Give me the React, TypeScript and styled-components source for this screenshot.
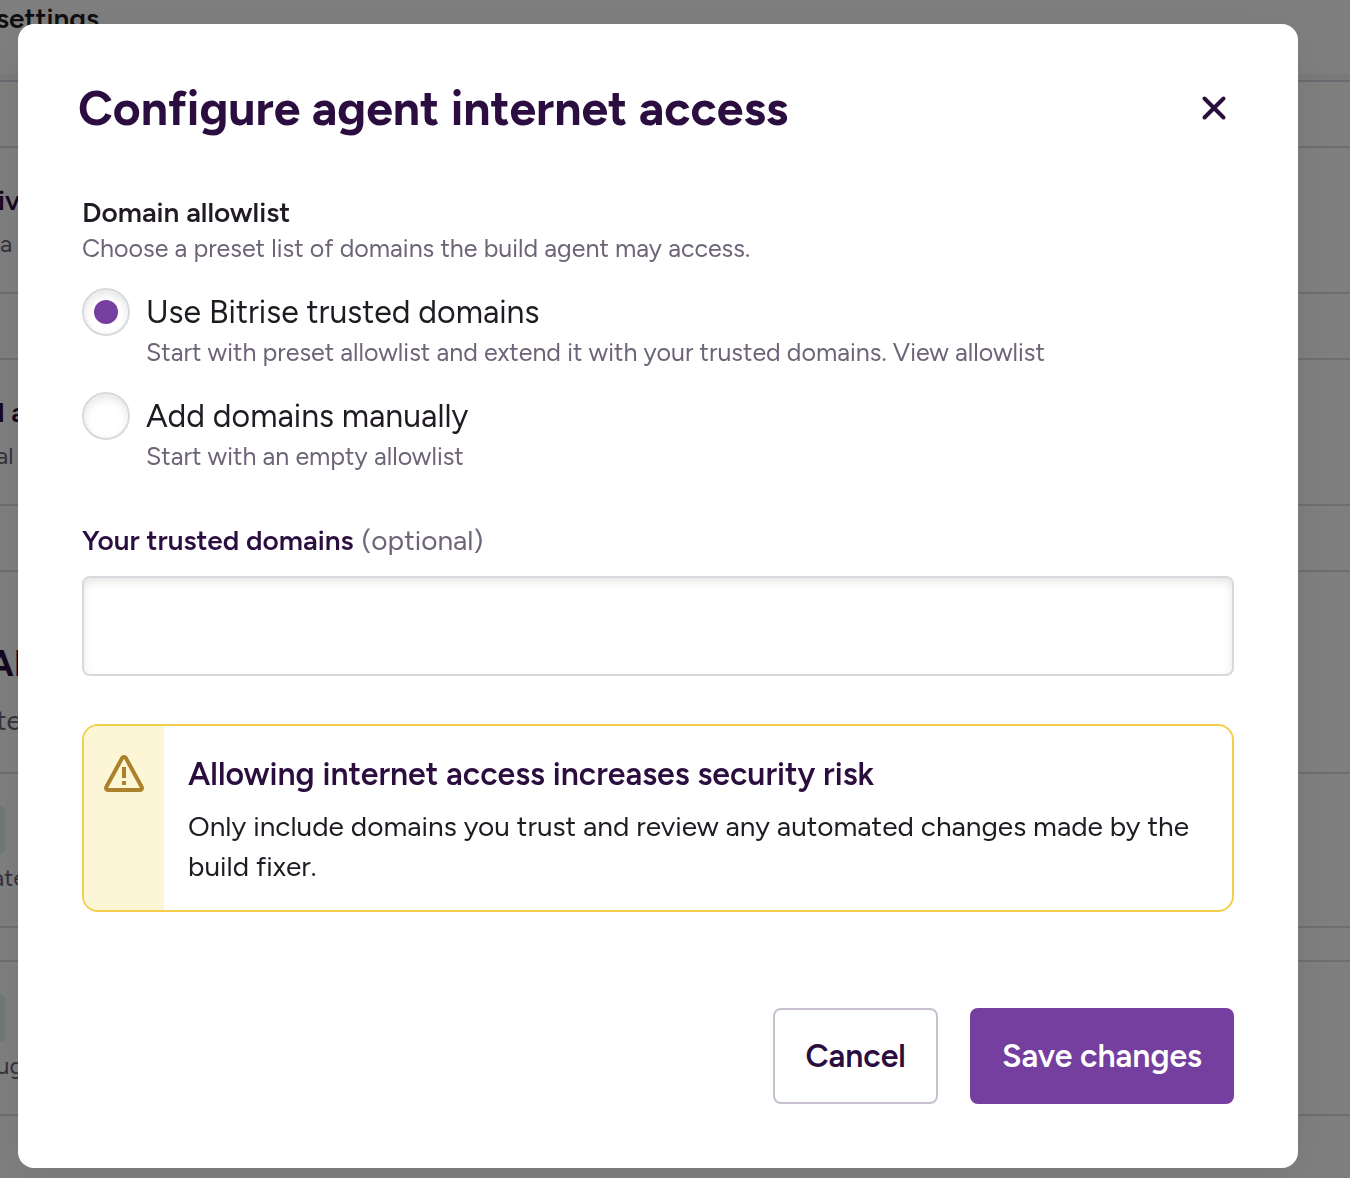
import React, { useState } from 'react';
import styled, { createGlobalStyle } from 'styled-components';

const color = {
  ink: '#201b22',
  heading: '#2b0e3f',
  muted: '#6e6478',
  purple: '#743f9f',
  border: '#dad8df',
  buttonBorder: '#c9c1cf',
  warningBorder: '#f3ce4b',
  warningTint: '#fdf6d6',
  warningIcon: '#ac812b',
};

const GlobalStyle = createGlobalStyle`
  *, *::before, *::after { box-sizing: border-box; }
  body {
    margin: 0;
    background: #fff;
    color: ${color.ink};
    font-family: Figtree, Roboto, "Liberation Sans", sans-serif;
    overflow: hidden;
  }
  h1, h2, h3, p { margin: 0; }
`;

/* Settings page behind the dialog */

const Page = styled.div`
  min-height: 100vh;
  overflow: hidden;
`;

const PageHeader = styled.header`
  height: 82px;
  border-bottom: 2px solid #d5d2e0;
  box-shadow: inset 0 -6px 0 #f4f4f4;
`;

const PageTitle = styled.h2`
  margin-left: -4px;
  font-size: 28px;
  line-height: 36px;
  font-weight: 600;
`;

const Section = styled.section<{ $height: number; $intro?: boolean }>`
  display: flex;
  flex-direction: column;
  justify-content: center;
  align-items: flex-start;
  gap: ${(p) => (p.$intro ? 16 : 8)}px;
  height: ${(p) => p.$height}px;
  padding-top: ${(p) => (p.$intro ? 32 : 0)}px;
  border-bottom: 2px solid #dcdcdc;
  white-space: nowrap;
`;

const SectionTitle = styled.h3<{ $large?: boolean }>`
  margin-left: ${(p) => (p.$large ? -12 : -2)}px;
  color: ${color.heading};
  font-size: ${(p) => (p.$large ? 36 : 28)}px;
  line-height: ${(p) => (p.$large ? 48 : 40)}px;
  font-weight: ${(p) => (p.$large ? 700 : 600)};
`;

const SectionText = styled.p<{ $large?: boolean; $bleed?: number }>`
  margin-left: -${(p) => p.$bleed ?? 0}px;
  color: ${color.muted};
  font-size: ${(p) => (p.$large ? 28 : 24)}px;
  line-height: 32px;
`;

const Badge = styled.span`
  width: 5px;
  height: 48px;
  border-radius: 0 8px 8px 0;
  background: #d9f3f1;
`;

/* Dialog */

const Overlay = styled.div`
  position: fixed;
  inset: 0;
  display: flex;
  justify-content: center;
  align-items: flex-start;
  padding: 24px 52px 10px 18px;
  background: rgba(0, 0, 0, 0.5);
  overflow: auto;
`;

const Dialog = styled.div`
  width: 100%;
  max-width: 1280px;
  padding: 56px 64px 64px;
  border-radius: 16px;
  background: #fff;
  box-shadow: 0 8px 48px rgba(0, 0, 0, 0.08);
`;

const DialogHeader = styled.header`
  display: flex;
  justify-content: space-between;
  align-items: center;
  margin: 0 -8px 56px -4px;
`;

const DialogTitle = styled.h1`
  color: ${color.heading};
  font-size: 48px;
  line-height: 56px;
  font-weight: 700;
`;

const CloseButton = styled.button`
  display: flex;
  padding: 8px;
  border: 0;
  background: none;
  color: ${color.heading};
  cursor: pointer;
`;

const Fieldset = styled.fieldset`
  display: flex;
  flex-direction: column;
  margin: 0 0 48px;
  padding: 0;
  border: 0;
`;

const Legend = styled.legend`
  padding: 0;
  font-size: 28px;
  line-height: 40px;
  font-weight: 600;
`;

const HelpText = styled.p`
  color: ${color.muted};
  font-size: 25px;
  line-height: 32px;
`;

const Options = styled.div`
  display: flex;
  flex-direction: column;
  gap: 24px;
  margin-top: 24px;
`;

const Option = styled.div`
  display: grid;
  grid-template-columns: 48px 1fr;
  column-gap: 16px;
`;

const Radio = styled.input`
  appearance: none;
  display: grid;
  place-items: center;
  width: 48px;
  height: 48px;
  margin: 0;
  border: 2px solid ${color.border};
  border-radius: 50%;
  background: #fff;
  box-shadow: inset 0 4px 8px rgba(0, 0, 0, 0.1);

  &:checked::before {
    content: '';
    width: 24px;
    height: 24px;
    border-radius: 50%;
    background: ${color.purple};
  }
`;

const OptionLabel = styled.label`
  font-size: 32px;
  line-height: 48px;
`;

const OptionHelp = styled(HelpText)`
  grid-column: 2;
`;

const Link = styled.a`
  color: inherit;
  text-decoration: none;
`;

const Field = styled.div`
  display: flex;
  flex-direction: column;
  gap: 16px;
  margin-bottom: 48px;
`;

const FieldLabel = styled.label`
  display: flex;
  gap: 8px;
  color: ${color.heading};
  font-size: 28px;
  line-height: 40px;
  font-weight: 600;
`;

const Optional = styled.span`
  color: ${color.muted};
  font-weight: 400;
`;

const TextInput = styled.input`
  width: 100%;
  height: 100px;
  padding: 0 24px;
  border: 2px solid ${color.border};
  border-radius: 8px;
  background: #fff;
  box-shadow: inset 0 4px 8px rgba(0, 0, 0, 0.1);
  color: ${color.ink};
  font: inherit;
  font-size: 32px;
  outline: none;
`;

const Alert = styled.div`
  display: flex;
  margin-bottom: 96px;
  border: 2px solid ${color.warningBorder};
  border-radius: 16px;
  overflow: hidden;
`;

const AlertIcon = styled.div`
  flex: none;
  width: 80px;
  padding: 24px 16px;
  background: ${color.warningTint};
  color: ${color.warningIcon};
`;

const AlertBody = styled.div`
  display: flex;
  flex-direction: column;
  gap: 8px;
  padding: 24px;
`;

const AlertTitle = styled.h2`
  color: ${color.heading};
  font-size: 32px;
  line-height: 48px;
  font-weight: 600;
`;

const AlertText = styled.p`
  font-size: 28px;
  line-height: 40px;
`;

const Actions = styled.footer`
  display: flex;
  justify-content: flex-end;
  gap: 32px;
`;

const Button = styled.button<{ $primary?: boolean }>`
  height: 96px;
  padding: 0 ${(p) => (p.$primary ? 32 : 30)}px;
  border: ${(p) => (p.$primary ? '0' : `2px solid ${color.buttonBorder}`)};
  border-radius: 8px;
  background: ${(p) => (p.$primary ? color.purple : '#fff')};
  color: ${(p) => (p.$primary ? '#fff' : color.heading)};
  font: inherit;
  font-size: 32px;
  font-weight: 600;
  cursor: pointer;
`;

const CloseIcon = () => (
  <svg width="40" height="40" viewBox="0 0 40 40" fill="none" stroke="currentColor" strokeWidth="4" strokeLinecap="round" aria-hidden="true">
    <path d="M10.5 10.5 29.5 29.5M29.5 10.5 10.5 29.5" />
  </svg>
);

const WarningIcon = () => (
  <svg width="48" height="48" viewBox="0 0 48 48" fill="none" aria-hidden="true">
    <path
      d="M22.1 8.1a2.2 2.2 0 0 1 3.8 0l15.8 28.9a2 2 0 0 1-1.7 3H8a2 2 0 0 1-1.7-3Z"
      stroke="currentColor"
      strokeWidth="4"
      strokeLinejoin="round"
    />
    <path d="M22 17h4v11h-4zM22 31h4v4h-4z" fill="currentColor" />
  </svg>
);

type Mode = 'trusted' | 'manual';

export default function App() {
  const [mode, setMode] = useState<Mode>('trusted');
  const [domains, setDomains] = useState('');

  return (
    <>
      <GlobalStyle />
      <Page aria-hidden="true">
        <PageHeader>
          <PageTitle>settings</PageTitle>
        </PageHeader>
        <Section $height={66} />
        <Section $height={146}>
          <SectionTitle>iv</SectionTitle>
          <SectionText>a</SectionText>
        </Section>
        <Section $height={66} />
        <Section $height={146}>
          <SectionTitle>l a</SectionTitle>
          <SectionText $bleed={4}>al</SectionText>
        </Section>
        <Section $height={66} />
        <Section $height={202} $intro>
          <SectionTitle $large>AI</SectionTitle>
          <SectionText $large $bleed={4}>te</SectionText>
        </Section>
        <Section $height={154}>
          <Badge />
          <SectionText $bleed={8}>ate</SectionText>
        </Section>
        <Section $height={34} />
        <Section $height={154}>
          <Badge />
          <SectionText $bleed={4}>ug</SectionText>
        </Section>
      </Page>

      <Overlay>
        <Dialog role="dialog" aria-modal="true" aria-labelledby="dialog-title">
          <DialogHeader>
            <DialogTitle id="dialog-title">Configure agent internet access</DialogTitle>
            <CloseButton type="button" aria-label="Close">
              <CloseIcon />
            </CloseButton>
          </DialogHeader>

          <Fieldset>
            <Legend>Domain allowlist</Legend>
            <HelpText>Choose a preset list of domains the build agent may access.</HelpText>
            <Options>
              <Option>
                <Radio type="radio" id="mode-trusted" name="mode" checked={mode === 'trusted'} onChange={() => setMode('trusted')} />
                <OptionLabel htmlFor="mode-trusted">Use Bitrise trusted domains</OptionLabel>
                <OptionHelp>
                  Start with preset allowlist and extend it with your trusted domains. <Link href="#allowlist">View allowlist</Link>
                </OptionHelp>
              </Option>
              <Option>
                <Radio type="radio" id="mode-manual" name="mode" checked={mode === 'manual'} onChange={() => setMode('manual')} />
                <OptionLabel htmlFor="mode-manual">Add domains manually</OptionLabel>
                <OptionHelp>Start with an empty allowlist</OptionHelp>
              </Option>
            </Options>
          </Fieldset>

          <Field>
            <FieldLabel htmlFor="domains">
              Your trusted domains <Optional>(optional)</Optional>
            </FieldLabel>
            <TextInput id="domains" type="text" value={domains} onChange={(e) => setDomains(e.target.value)} />
          </Field>

          <Alert role="note">
            <AlertIcon>
              <WarningIcon />
            </AlertIcon>
            <AlertBody>
              <AlertTitle>Allowing internet access increases security risk</AlertTitle>
              <AlertText>Only include domains you trust and review any automated changes made by the build fixer.</AlertText>
            </AlertBody>
          </Alert>

          <Actions>
            <Button type="button">Cancel</Button>
            <Button type="button" $primary>
              Save changes
            </Button>
          </Actions>
        </Dialog>
      </Overlay>
    </>
  );
}
